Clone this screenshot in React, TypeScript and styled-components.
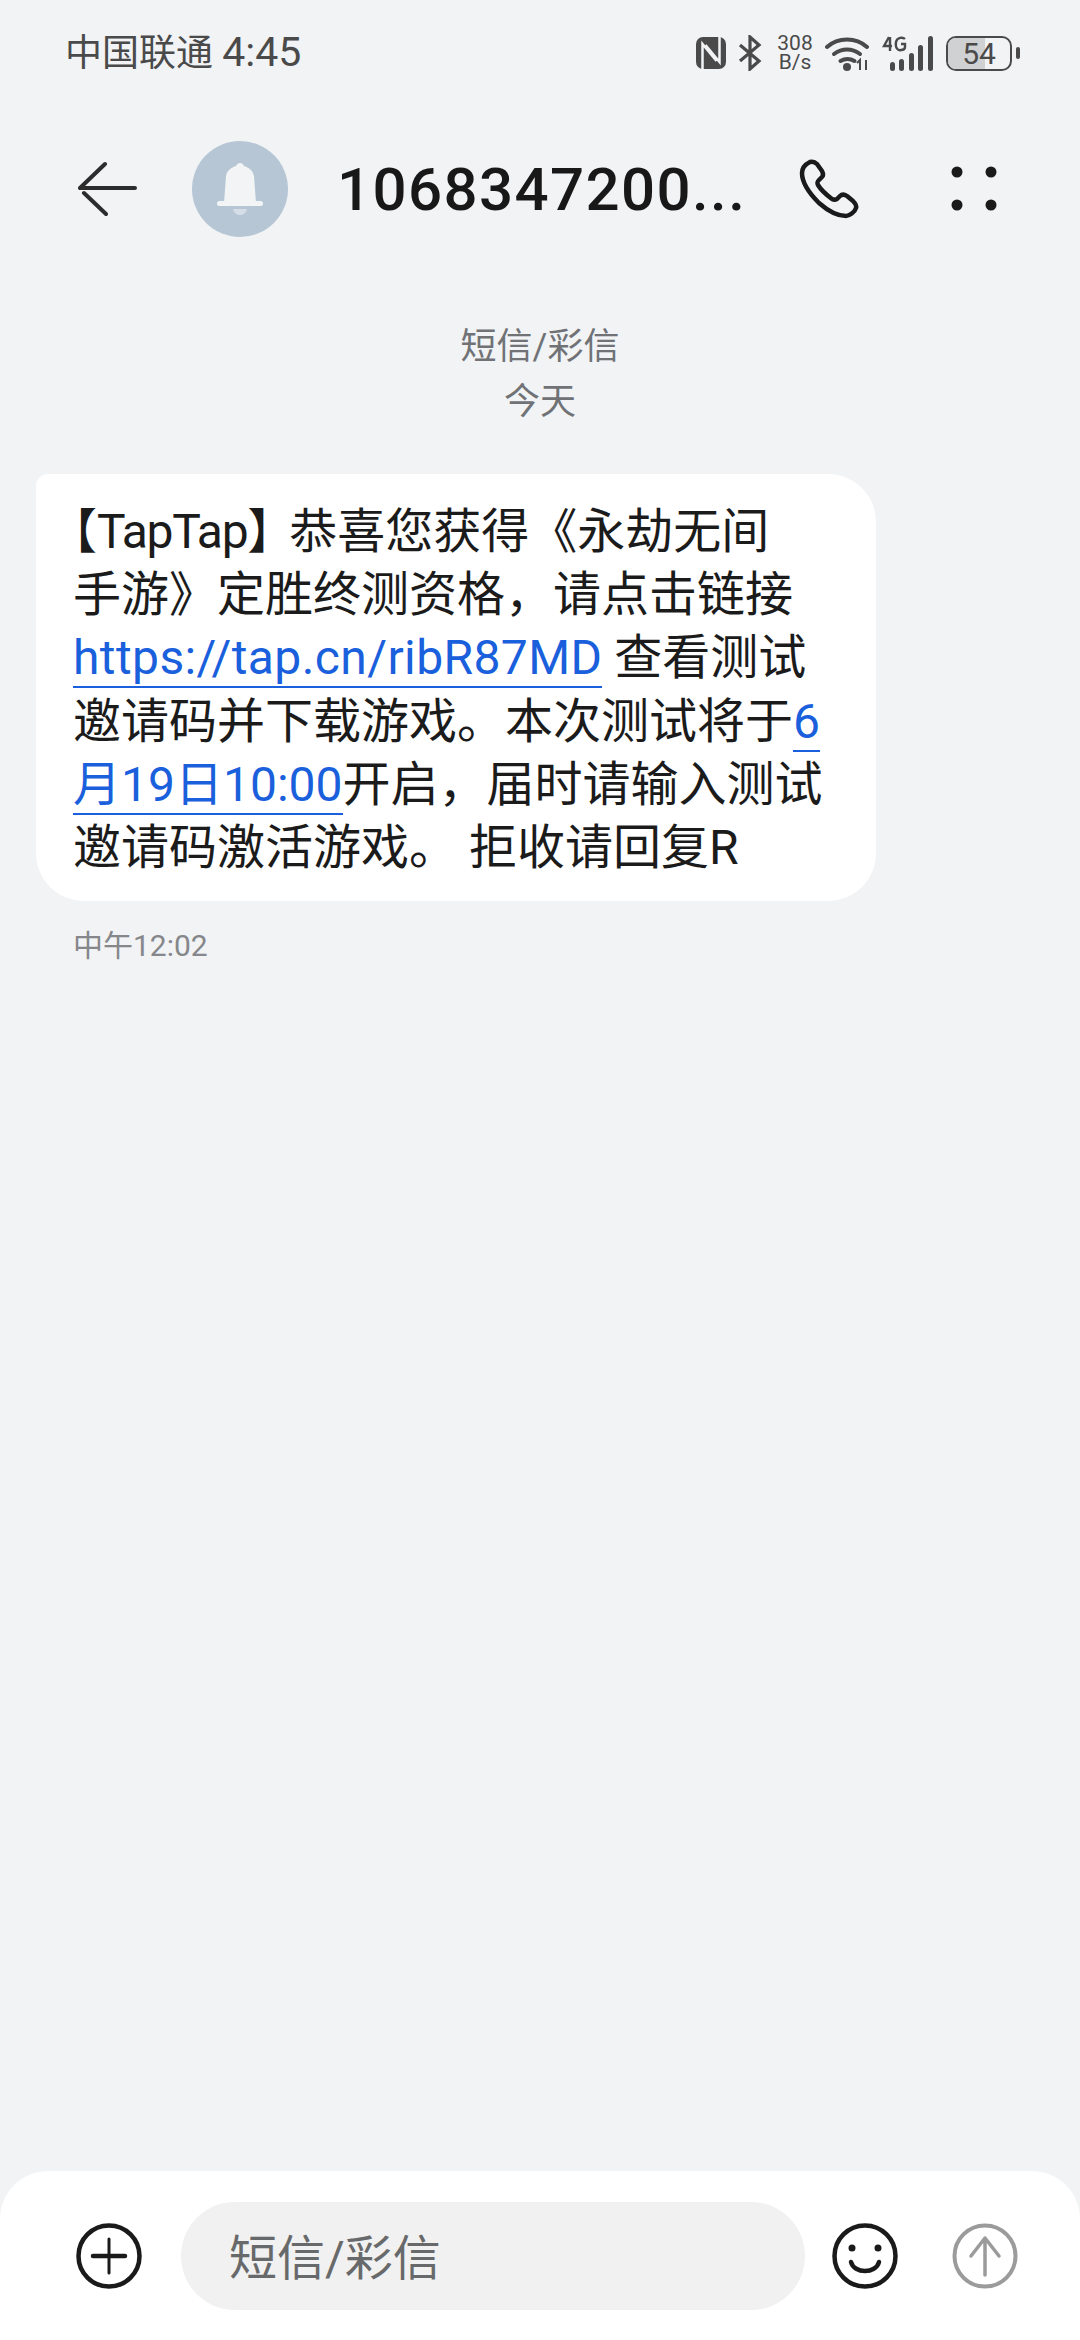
import React from "react";
import styled, { createGlobalStyle } from "styled-components";

const FONT = `Roboto, "Noto Sans CJK SC", sans-serif`;

const GlobalStyle = createGlobalStyle`
  html, body {
    margin: 0;
    padding: 0;
    background: #f1f3f5;
  }
  * { box-sizing: border-box; }
`;

const Screen = styled.div`
  width: 1080px;
  height: 2340px;
  display: flex;
  flex-direction: column;
  background: #f1f3f5;
  font-family: ${FONT};
  overflow: hidden;
`;

const StatusBar = styled.div`
  height: 72px;
  padding: 34px 60px 0 65px;
  display: flex;
  align-items: center;
  justify-content: space-between;
`;

const Carrier = styled.div`
  font-size: 37px;
  line-height: 40px;
  color: #4a4a4a;
  white-space: nowrap;
`;

const Clock = styled.span`
  font-size: 41px;
`;

const StatusIcons = styled.div`
  display: flex;
  align-items: center;
`;

const NetSpeed = styled.div`
  width: 38px;
  margin: 0 11px 0 14px;
  font-size: 21px;
  line-height: 19px;
  text-align: center;
  color: #4a4a4a;
`;

const Battery = styled.div`
  position: relative;
  width: 66px;
  height: 35px;
  margin-left: 12px;
  border: 2.5px solid #4a4a4a;
  border-radius: 10px;
  overflow: hidden;
  display: flex;
  align-items: center;
  justify-content: center;
  font-size: 30px;
  color: #4a4a4a;
`;

const BatteryFill = styled.div`
  position: absolute;
  left: 0;
  top: 0;
  bottom: 0;
  background: #cfd1d3;
`;

const BatteryLevel = styled.span`
  position: relative;
`;

const BatteryCap = styled.div`
  width: 4px;
  height: 12px;
  margin-left: 4px;
  border-radius: 2px;
  background: #4a4a4a;
`;

const Header = styled.header`
  height: 96px;
  margin-top: 69px;
  padding: 0 74px 0 78px;
  display: flex;
  align-items: center;
`;

const Avatar = styled.div`
  width: 96px;
  height: 96px;
  margin-left: 55px;
  border-radius: 50%;
  background: #b6c6d5;
  display: flex;
  align-items: center;
  justify-content: center;
  flex-shrink: 0;
`;

const Title = styled.div`
  width: 412px;
  margin-left: 49px;
  font-size: 60px;
  font-weight: 500;
  letter-spacing: 1.4px;
  color: #181818;
  white-space: nowrap;
`;

const CallIcon = styled.svg`
  margin-left: 49px;
  flex-shrink: 0;
`;

const MoreIcon = styled.svg`
  margin-left: 91px;
  flex-shrink: 0;
`;

const Thread = styled.main`
  flex: 1;
  padding-top: 83px;
  display: flex;
  flex-direction: column;
`;

const Notice = styled.div`
  font-size: 36px;
  line-height: 55px;
  text-align: center;
  color: #707275;
`;

const Bubble = styled.div`
  width: 840px;
  height: 427px;
  margin: 44px 0 0 36px;
  padding: 26px 0 0 37px;
  background: #fff;
  border-radius: 12px 48px 48px 48px;
  font-size: 48px;
  line-height: 63.2px;
  color: #1b1b1b;
  white-space: nowrap;
`;

const OpenBracket = styled.span`
  font-feature-settings: "halt";
`;

const CloseBracket = styled.span`
  letter-spacing: -6px;
`;

const Sender = styled.span`
  letter-spacing: -1.3px;
`;

const MsgLink = styled.span`
  color: #1a5fdc;
  border-bottom: 2px solid #1a5fdc;
`;

const UrlText = styled.span`
  letter-spacing: 0.4px;
`;

const Stamp = styled.div`
  margin: 27px 0 0 73px;
  font-size: 30px;
  line-height: 36px;
  color: #85878a;
`;

const Composer = styled.footer`
  height: 169px;
  padding: 31px 60px 0 76px;
  background: #fff;
  border-radius: 48px 48px 0 0;
  display: flex;
  align-items: flex-start;
`;

const RoundIcon = styled.svg<{ $left: number }>`
  margin: 21px 0 0 ${({ $left }) => $left}px;
  flex-shrink: 0;
`;

const Input = styled.div`
  width: 624px;
  height: 108px;
  margin-left: 39px;
  padding: 0 0 4px 48px;
  border-radius: 54px;
  background: #f1f1f1;
  display: flex;
  align-items: center;
  font-size: 48px;
  color: #68696a;
`;

export default function App() {
  return (
    <Screen>
      <GlobalStyle />
      <StatusBar>
        <Carrier>
          中国联通 <Clock>4:45</Clock>
        </Carrier>
        <StatusIcons>
          {/* nfc */}
          <svg width="32" height="34" viewBox="0 0 32 34">
            <rect x="1" y="1" width="30" height="32" rx="7" fill="#4a4a4a" />
            <path d="M7.500 33V8l14 17" fill="none" stroke="#f1f3f5" strokeWidth="2.500" />
            <path d="M24.500 1v25L10.500 9" fill="none" stroke="#f1f3f5" strokeWidth="2.500" />
          </svg>
          {/* bluetooth */}
          <svg width="24" height="36" viewBox="0 0 24 36" style={{ marginLeft: 11 }}>
            <path d="M2 10l19 16-9 8V2l9 8L2 26" fill="none" stroke="#4a4a4a" strokeWidth="3.200" />
          </svg>
          <NetSpeed>
            308
            <br />
            B/s
          </NetSpeed>
          {/* wifi */}
          <svg width="46" height="36" viewBox="0 0 46 36">
            <path d="M2 12C13 2 31 2 42 12" fill="none" stroke="#4a4a4a" strokeWidth="4" strokeLinecap="round" />
            <path d="M9 19c8-6 18-6 26 0" fill="none" stroke="#4a4a4a" strokeWidth="4" strokeLinecap="round" />
            <path d="M15.500 26c5-3 9-3 14 0" fill="none" stroke="#4a4a4a" strokeWidth="4" strokeLinecap="round" />
            <circle cx="22" cy="32" r="4" fill="#4a4a4a" />
            <path d="M35 35V25l-3 3M41 25v10" fill="none" stroke="#4a4a4a" strokeWidth="2" />
          </svg>
          {/* 4g signal */}
          <svg width="52" height="36" viewBox="0 0 52 36" style={{ marginLeft: 11 }}>
            <path d="M7 2L2 11h8M8 2v14" fill="none" stroke="#4a4a4a" strokeWidth="2.400" />
            <path d="M23 4c-2-2-8-2-9 3-1 6 2 9 5 8 2 0 4-1 4-3V9h-4" fill="none" stroke="#4a4a4a" strokeWidth="2.400" />
            <rect x="8" y="27" width="5" height="9" rx="2.500" fill="#4a4a4a" />
            <rect x="17" y="24" width="5" height="12" rx="2.500" fill="#4a4a4a" />
            <rect x="27" y="18" width="5" height="18" rx="2.500" fill="#4a4a4a" />
            <rect x="36" y="10" width="5" height="26" rx="2.500" fill="#4a4a4a" />
            <rect x="46" y="1" width="5" height="35" rx="2.500" fill="#4a4a4a" />
          </svg>
          <Battery>
            <BatteryFill style={{ width: "60%" }} />
            <BatteryLevel>54</BatteryLevel>
          </Battery>
          <BatteryCap />
        </StatusIcons>
      </StatusBar>

      <Header>
        <svg width="59" height="56" viewBox="0 0 59 56">
          <path
            d="M27 3L2 27h55M6 32l22 21"
            fill="none"
            stroke="#2c2c2c"
            strokeWidth="4"
            strokeLinecap="round"
            strokeLinejoin="round"
          />
        </svg>
        <Avatar>
          <svg width="46" height="56" viewBox="0 0 46 56">
            <path
              d="M23 2c2 0 3 1 4 3 6 2 9 5 10 10l2 27H7l2-27C10 10 13 7 19 5c1-2 2-3 4-3z"
              fill="#f3f4f6"
            />
            <rect x="0" y="40" width="46" height="5" rx="2.500" fill="#f3f4f6" />
            <path d="M16 48h14c-1 4-4 6-7 6s-6-2-7-6z" fill="#d5dee6" />
          </svg>
        </Avatar>
        <Title>1068347200...</Title>
        <CallIcon width="62" height="62" viewBox="0 0 62 62">
          <path
            d="M12 4c-4 2-8 6-8 11 0 10 9 22 17 30 8 7 18 13 27 13 3 0 9-4 10-8 1-3-1-5-3-7l-6-5c-3-2-5-2-7 0l-3 3c-2 1-3 1-5 0-4-3-11-9-14-14-1-2-1-3 1-5l3-3c2-2 1-4 0-6l-5-7c-2-2-4-3-7-2z"
            fill="none"
            stroke="#1a1a1a"
            strokeWidth="4.500"
            strokeLinejoin="round"
          />
        </CallIcon>
        <MoreIcon width="46" height="46" viewBox="0 0 46 46">
          <circle cx="6" cy="6" r="5.500" fill="#1a1a1a" />
          <circle cx="40" cy="6" r="5.500" fill="#1a1a1a" />
          <circle cx="6" cy="39" r="5.500" fill="#1a1a1a" />
          <circle cx="40" cy="39" r="5.500" fill="#1a1a1a" />
        </MoreIcon>
      </Header>

      <Thread>
        <Notice>
          短信/彩信
          <br />
          今天
        </Notice>
        <Bubble>
          <OpenBracket>【</OpenBracket>
          <Sender>TapTap</Sender>
          <CloseBracket>】</CloseBracket>恭喜您获得《永劫无间
          <br />
          手游》定胜终测资格，请点击链接
          <br />
          <MsgLink>
            <UrlText>https://tap.cn/ribR87MD</UrlText>
          </MsgLink>{" "}
          查看测试
          <br />
          邀请码并下载游戏。本次测试将于<MsgLink>6</MsgLink>
          <br />
          <MsgLink>月19日10:00</MsgLink>开启，届时请输入测试
          <br />
          邀请码激活游戏。 拒收请回复R
        </Bubble>
        <Stamp>中午12:02</Stamp>
      </Thread>

      <Composer>
        <RoundIcon $left={0} width="66" height="66" viewBox="0 0 66 66">
          <circle cx="33" cy="33" r="30.500" fill="none" stroke="#1a1a1a" strokeWidth="4.500" />
          <path d="M33 16v34" stroke="#1a1a1a" strokeWidth="3" strokeLinecap="round" />
          <path d="M17 33h32" stroke="#1a1a1a" strokeWidth="4.500" strokeLinecap="round" />
        </RoundIcon>
        <Input>短信/彩信</Input>
        <RoundIcon $left={27} width="66" height="66" viewBox="0 0 66 66">
          <circle cx="33" cy="33" r="30.500" fill="none" stroke="#1a1a1a" strokeWidth="4.500" />
          <circle cx="20" cy="25" r="3.500" fill="#1a1a1a" />
          <circle cx="46" cy="25" r="3.500" fill="#1a1a1a" />
          <path d="M19 39c3 12 25 12 28 0" fill="none" stroke="#1a1a1a" strokeWidth="4.500" strokeLinecap="round" />
        </RoundIcon>
        <RoundIcon $left={54} width="66" height="66" viewBox="0 0 66 66">
          <circle cx="33" cy="33" r="30.500" fill="none" stroke="#9b9b9b" strokeWidth="4" />
          <path d="M33 52V16M19 33l14-18 14 18" fill="none" stroke="#9b9b9b" strokeWidth="3.500" strokeLinecap="round" strokeLinejoin="round" />
        </RoundIcon>
      </Composer>
    </Screen>
  );
}
